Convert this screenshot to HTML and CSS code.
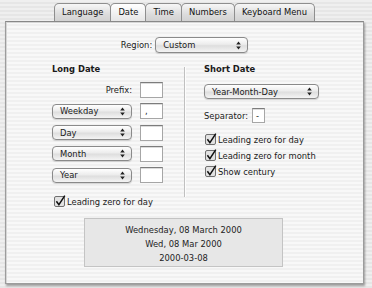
FILE: index.html
```html
<!DOCTYPE html>
<html>
<head>
  <meta charset="UTF-8">
  <title>Date</title>
  <link rel="stylesheet" href="styles.css">
</head>
<body>
  <div class="window">
    <div class="tabs">
      <span class="tab">Language</span>
      <span class="tab selected">Date</span>
      <span class="tab">Time</span>
      <span class="tab">Numbers</span>
      <span class="tab">Keyboard Menu</span>
    </div>

    <div class="panel">
      <div class="region-row">
        <span>Region:</span>
        <div class="popup popup-region">
          <span>Custom</span>
          <svg class="arrows" width="5" height="9" viewBox="0 0 5 9"><path d="M2.5 0.5 L4.8 3.6 H0.2 Z M2.5 8.5 L0.2 5.4 H4.8 Z" fill="#222"/></svg>
        </div>
      </div>

      <div class="columns">
        <div class="col col-long">
          <h2>Long Date</h2>
          <div class="fields">
            <div class="row">
              <span class="prefix-label">Prefix:</span>
              <span class="field"></span>
            </div>
            <div class="row">
              <div class="popup popup-sm">
                <span>Weekday</span>
                <svg class="arrows" width="5" height="9" viewBox="0 0 5 9"><path d="M2.5 0.5 L4.8 3.6 H0.2 Z M2.5 8.5 L0.2 5.4 H4.8 Z" fill="#222"/></svg>
              </div>
              <span class="field">,</span>
            </div>
            <div class="row">
              <div class="popup popup-sm">
                <span>Day</span>
                <svg class="arrows" width="5" height="9" viewBox="0 0 5 9"><path d="M2.5 0.5 L4.8 3.6 H0.2 Z M2.5 8.5 L0.2 5.4 H4.8 Z" fill="#222"/></svg>
              </div>
              <span class="field"></span>
            </div>
            <div class="row">
              <div class="popup popup-sm">
                <span>Month</span>
                <svg class="arrows" width="5" height="9" viewBox="0 0 5 9"><path d="M2.5 0.5 L4.8 3.6 H0.2 Z M2.5 8.5 L0.2 5.4 H4.8 Z" fill="#222"/></svg>
              </div>
              <span class="field"></span>
            </div>
            <div class="row">
              <div class="popup popup-sm">
                <span>Year</span>
                <svg class="arrows" width="5" height="9" viewBox="0 0 5 9"><path d="M2.5 0.5 L4.8 3.6 H0.2 Z M2.5 8.5 L0.2 5.4 H4.8 Z" fill="#222"/></svg>
              </div>
              <span class="field"></span>
            </div>
          </div>
          <label class="check check-long">
            <svg width="12" height="12" viewBox="0 0 12 12"><rect x="0.5" y="1.5" width="10" height="10" rx="1.5" fill="#e2e2e2" stroke="#707070"/><path d="M2.4 6.2 L4.9 9.6 L10.8 0.6" fill="none" stroke="#111" stroke-width="1.5"/></svg>
            Leading zero for day
          </label>
        </div>

        <div class="divider"></div>

        <div class="col col-short">
          <h2>Short Date</h2>
          <div class="popup popup-wide">
            <span>Year-Month-Day</span>
            <svg class="arrows" width="5" height="9" viewBox="0 0 5 9"><path d="M2.5 0.5 L4.8 3.6 H0.2 Z M2.5 8.5 L0.2 5.4 H4.8 Z" fill="#222"/></svg>
          </div>
          <div class="separator-row">
            <span>Separator:</span>
            <span class="field field-sep">-</span>
          </div>
          <div class="checks">
            <label class="check">
              <svg width="12" height="12" viewBox="0 0 12 12"><rect x="0.5" y="1.5" width="10" height="10" rx="1.5" fill="#e2e2e2" stroke="#707070"/><path d="M2.4 6.2 L4.9 9.6 L10.8 0.6" fill="none" stroke="#111" stroke-width="1.5"/></svg>
              Leading zero for day
            </label>
            <label class="check">
              <svg width="12" height="12" viewBox="0 0 12 12"><rect x="0.5" y="1.5" width="10" height="10" rx="1.5" fill="#e2e2e2" stroke="#707070"/><path d="M2.4 6.2 L4.9 9.6 L10.8 0.6" fill="none" stroke="#111" stroke-width="1.5"/></svg>
              Leading zero for month
            </label>
            <label class="check">
              <svg width="12" height="12" viewBox="0 0 12 12"><rect x="0.5" y="1.5" width="10" height="10" rx="1.5" fill="#e2e2e2" stroke="#707070"/><path d="M2.4 6.2 L4.9 9.6 L10.8 0.6" fill="none" stroke="#111" stroke-width="1.5"/></svg>
              Show century
            </label>
          </div>
        </div>
      </div>

      <div class="preview">
        <div>Wednesday, 08 March 2000</div>
        <div>Wed, 08 Mar 2000</div>
        <div>2000-03-08</div>
      </div>
    </div>
  </div>
</body>
</html>
```

FILE: styles.css
```css
* {
  box-sizing: border-box;
}

body {
  margin: 0;
  width: 372px;
  height: 288px;
  overflow: hidden;
  font-family: 'DejaVu Sans', sans-serif;
  font-size: 8.4px;
  color: #1a1a1a;
  background: repeating-linear-gradient(to bottom, #efefef 0 2px, #e6e6e6 2px 4px);
}

.window {
  padding-top: 3px;
}

/* tabs */
.tabs {
  display: flex;
  justify-content: center;
  height: 18px;
  padding-right: 2px;
}

.tab {
  padding: 0 7px;
  line-height: 17px;
  border: 1px solid #8e8e8e;
  border-bottom: none;
  border-radius: 5px 5px 0 0;
  background: linear-gradient(#f7f7f7, #dcdcdc 60%, #d2d2d2);
  margin-left: -1px;
  color: #111;
}

.tab.selected {
  background: linear-gradient(#ffffff, #f0f0f0 60%, #e6e6e6);
}

/* panel */
.panel {
  margin: 0 8px 0 5px;
  height: 263px;
  border: 1px solid #9c9c9c;
  border-top-color: #888;
  background: repeating-linear-gradient(to bottom, #f8f8f8 0 2px, #f0f0f0 2px 4px);
  box-shadow: 1px 2px 2px rgba(0, 0, 0, 0.35), inset 1px 1px 0 #d6d6d6;
  padding-top: 15px;
}

.region-row {
  display: flex;
  justify-content: center;
  align-items: center;
  gap: 3px;
  height: 16px;
}

/* popup buttons */
.popup {
  display: flex;
  align-items: center;
  justify-content: space-between;
  padding: 0 6px 0 7px;
  border: 1px solid #8a8a8a;
  border-radius: 4px;
  background: linear-gradient(#ffffff, #ececec 45%, #dedede 55%, #f4f4f4);
  box-shadow: 0 1px 1px rgba(0, 0, 0, 0.15);
}

.popup-region {
  width: 93px;
  height: 16px;
}

.popup-sm {
  width: 80px;
  height: 15px;
}

.popup-wide {
  width: 115px;
  height: 15px;
  margin-top: 8px;
}

.arrows {
  flex: none;
}

/* columns */
.columns {
  display: flex;
  margin-top: 9px;
}

.col-long {
  width: 178px;
  padding-left: 46px;
}

.divider {
  width: 1px;
  height: 130px;
  margin-top: 5px;
  background: #c0c0c0;
  box-shadow: 1px 0 0 #fdfdfd;
}

.col-short {
  padding-left: 19px;
}

h2 {
  margin: 0;
  font-size: 8.4px;
  font-weight: bold;
  line-height: 14px;
}

.fields {
  display: flex;
  flex-direction: column;
  gap: 5.25px;
  margin-top: 6px;
}

.row {
  display: flex;
  align-items: center;
  gap: 8px;
  height: 16px;
}

.prefix-label {
  width: 80px;
  text-align: right;
}

.field {
  width: 23px;
  height: 16px;
  padding-left: 4px;
  line-height: 14px;
  background: #fff;
  border: 1px solid #a6a6a6;
  border-top-color: #7c7c7c;
  box-shadow: inset 0 1px 0 #dcdcdc;
}

.separator-row {
  display: flex;
  align-items: center;
  gap: 4px;
  height: 15px;
  margin-top: 9px;
}

.field-sep {
  width: 13px;
  height: 15px;
  padding-left: 3px;
}

/* checkboxes */
.check {
  display: flex;
  align-items: center;
  gap: 1px;
  line-height: 16px;
}

.check svg {
  margin-top: -2px;
}

.check-long {
  margin: 11px 0 0 2px;
}

.checks {
  margin-top: 9px;
  padding-left: 1px;
}

/* preview */
.preview {
  width: 199px;
  height: 49px;
  margin: 8px 0 0 78px;
  padding-top: 4px;
  border: 1px solid #c4c4c4;
  background: #e7e7e7;
  text-align: center;
  line-height: 14px;
  color: #222;
}
```
